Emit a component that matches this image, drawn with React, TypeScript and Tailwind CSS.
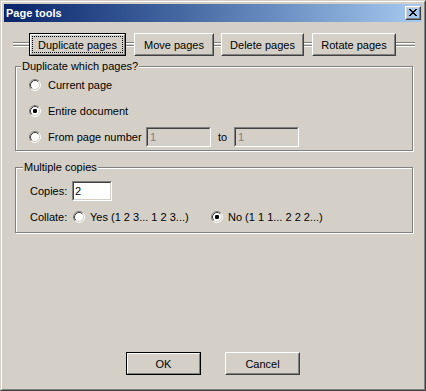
import React from "react";

const Radio = ({ checked }: { checked?: boolean }) => (
  <svg width="12" height="12" viewBox="0 0 12 12" className="shrink-0 block">
    <circle cx="6" cy="6" r="4.5" fill="#fff" />
    <path d="M2.11 9.89A5.5 5.5 0 0 1 9.89 2.11" stroke="#808080" fill="none" />
    <path d="M9.89 2.11A5.5 5.5 0 0 1 2.11 9.89" stroke="#ffffff" fill="none" />
    <path d="M2.82 9.18A4.5 4.5 0 0 1 9.18 2.82" stroke="#404040" fill="none" />
    <path d="M9.18 2.82A4.5 4.5 0 0 1 2.82 9.18" stroke="#d4d0c8" fill="none" />
    {checked && <rect x="4" y="4" width="4" height="4" rx="1.2" fill="#000" />}
  </svg>
);

const Line = ({ className }: { className: string }) => (
  <div className={"flex flex-col shrink-0 " + className}>
    <div className="h-px bg-[#808080]" />
    <div className="h-px bg-white" />
    <div className="h-px bg-[#d4d0c8]" />
    <div className="h-px bg-[#808080]" />
    <div className="h-px bg-white" />
  </div>
);

const Btn = ({
  children,
  className,
  def,
  focus,
}: {
  children: React.ReactNode;
  className: string;
  def?: boolean;
  focus?: boolean;
}) =>
  def ? (
    <div className={"shrink-0 h-[23px] border border-black " + className}>
      <div className="h-full border border-t-white border-l-white border-b-[#808080] border-r-[#808080] p-px">
        {focus ? (
          <div className="h-full border border-dotted border-black flex items-center justify-center">
            {children}
          </div>
        ) : (
          <div className="h-full flex items-center justify-center">{children}</div>
        )}
      </div>
    </div>
  ) : (
    <div
      className={
        "shrink-0 h-[23px] border border-t-white border-l-white border-b-[#404040] border-r-[#404040] " +
        className
      }
    >
      <div className="h-full border border-t-[#d4d0c8] border-l-[#d4d0c8] border-b-[#808080] border-r-[#808080] flex items-center justify-center">
        {children}
      </div>
    </div>
  );

const Sunken = ({
  className,
  value,
  disabled,
}: {
  className: string;
  value: string;
  disabled?: boolean;
}) => (
  <div
    className={
      "shrink-0 h-[20px] border border-t-[#808080] border-l-[#808080] border-b-white border-r-white " +
      className
    }
  >
    <div
      className={
        "h-full border border-t-[#404040] border-l-[#404040] border-b-[#d4d0c8] border-r-[#d4d0c8] flex items-center " +
        (disabled ? "bg-[#d4d0c8] text-[#808080] pl-[2px]" : "bg-white text-black pl-px")
      }
    >
      {value}
    </div>
  </div>
);

const CloseBtn = () => (
  <div className="w-[16px] h-[14px] shrink-0 border border-t-white border-l-white border-b-[#404040] border-r-[#404040]">
    <div className="h-full border border-t-[#d4d0c8] border-l-[#d4d0c8] border-b-[#808080] border-r-[#808080] flex items-center justify-center">
      <svg width="8" height="7" viewBox="0 0 8 7" className="block -mt-px -ml-px" shapeRendering="crispEdges">
        <rect x="0" y="0" width="2" height="1" fill="#000" />
        <rect x="6" y="0" width="2" height="1" fill="#000" />
        <rect x="1" y="1" width="2" height="1" fill="#000" />
        <rect x="5" y="1" width="2" height="1" fill="#000" />
        <rect x="2" y="2" width="4" height="1" fill="#000" />
        <rect x="3" y="3" width="2" height="1" fill="#000" />
        <rect x="2" y="4" width="4" height="1" fill="#000" />
        <rect x="1" y="5" width="2" height="1" fill="#000" />
        <rect x="5" y="5" width="2" height="1" fill="#000" />
        <rect x="0" y="6" width="2" height="1" fill="#000" />
        <rect x="6" y="6" width="2" height="1" fill="#000" />
      </svg>
    </div>
  </div>
);

export default function App() {
  return (
    <div className="w-[426px] h-[391px] bg-[#d4d0c8] border border-t-[#d4d0c8] border-l-[#d4d0c8] border-r-[#404040] border-b-[#404040] text-[11px] leading-[14px] text-black font-['Liberation_Sans',Arial,sans-serif] select-none">
      <div className="h-full border border-t-white border-l-white border-r-[#808080] border-b-[#808080] p-[2px] flex flex-col">
        {/* Title bar */}
        <div className="h-[18px] shrink-0 bg-linear-to-r from-[#0a246a] to-[#a6caf0] flex items-center pl-[2px] pr-[1px]">
          <span className="text-white font-bold flex-1">Page tools</span>
          <CloseBtn />
        </div>

        {/* Tab buttons */}
        <div className="flex items-center mt-[11px] h-[23px] pl-[9px]">
          <Line className="w-[16px]" />
          <Btn def focus className="w-[97px]">
            Duplicate pages
          </Btn>
          <Line className="w-[8px]" />
          <Btn className="w-[80px]">Move pages</Btn>
          <Line className="w-[7px]" />
          <Btn className="w-[83px]">Delete pages</Btn>
          <Line className="w-[8px]" />
          <Btn className="w-[84px]">Rotate pages</Btn>
          <Line className="w-[19px]" />
        </div>

        {/* Group 1 */}
        <div className="relative ml-[11px] mt-[10px] w-[398px] h-[85px] shrink-0 border border-[#808080] shadow-[inset_1px_1px_0_#fff,1px_1px_0_#fff]">
          <span className="absolute left-[5px] -top-[8px] px-px bg-[#d4d0c8]">Duplicate which pages?</span>
          <div className="flex flex-col pt-[8px] pl-[13px] gap-[6px]">
            <div className="h-[20px] flex items-center">
              <Radio />
              <span className="ml-[7px]">Current page</span>
            </div>
            <div className="h-[20px] flex items-center">
              <Radio checked />
              <span className="ml-[7px]">Entire document</span>
            </div>
            <div className="h-[20px] flex items-center">
              <div className="w-[117px] flex items-center shrink-0">
                <Radio />
                <span className="ml-[7px]">From page number</span>
              </div>
              <Sunken className="w-[65px] -mt-px" value="1" disabled />
              <span className="ml-[7px] w-[16px]">to</span>
              <Sunken className="w-[65px] -mt-px" value="1" disabled />
            </div>
          </div>
        </div>

        {/* Group 2 */}
        <div className="relative ml-[11px] mt-[16px] w-[398px] h-[66px] shrink-0 border border-[#808080] shadow-[inset_1px_1px_0_#fff,1px_1px_0_#fff]">
          <span className="absolute left-[7px] -top-[8px] px-px bg-[#d4d0c8]">Multiple copies</span>
          <div className="flex flex-col pt-[13px] pl-[14px] gap-[6px]">
            <div className="h-[20px] flex items-center">
              <span className="w-[42px] shrink-0">Copies:</span>
              <Sunken className="w-[40px]" value="2" />
            </div>
            <div className="h-[20px] flex items-center">
              <span className="w-[43px] shrink-0">Collate:</span>
              <div className="w-[138px] shrink-0 flex items-center">
                <Radio />
                <span className="ml-[5px]">Yes (1 2 3... 1 2 3...)</span>
              </div>
              <div className="flex items-center">
                <Radio checked />
                <span className="ml-[5px]">No (1 1 1... 2 2 2...)</span>
              </div>
            </div>
          </div>
        </div>

        {/* Bottom buttons */}
        <div className="mt-auto pb-[12px] flex justify-center gap-[24px]">
          <Btn def className="w-[75px]">
            OK
          </Btn>
          <Btn className="w-[75px]">Cancel</Btn>
        </div>
      </div>
    </div>
  );
}
